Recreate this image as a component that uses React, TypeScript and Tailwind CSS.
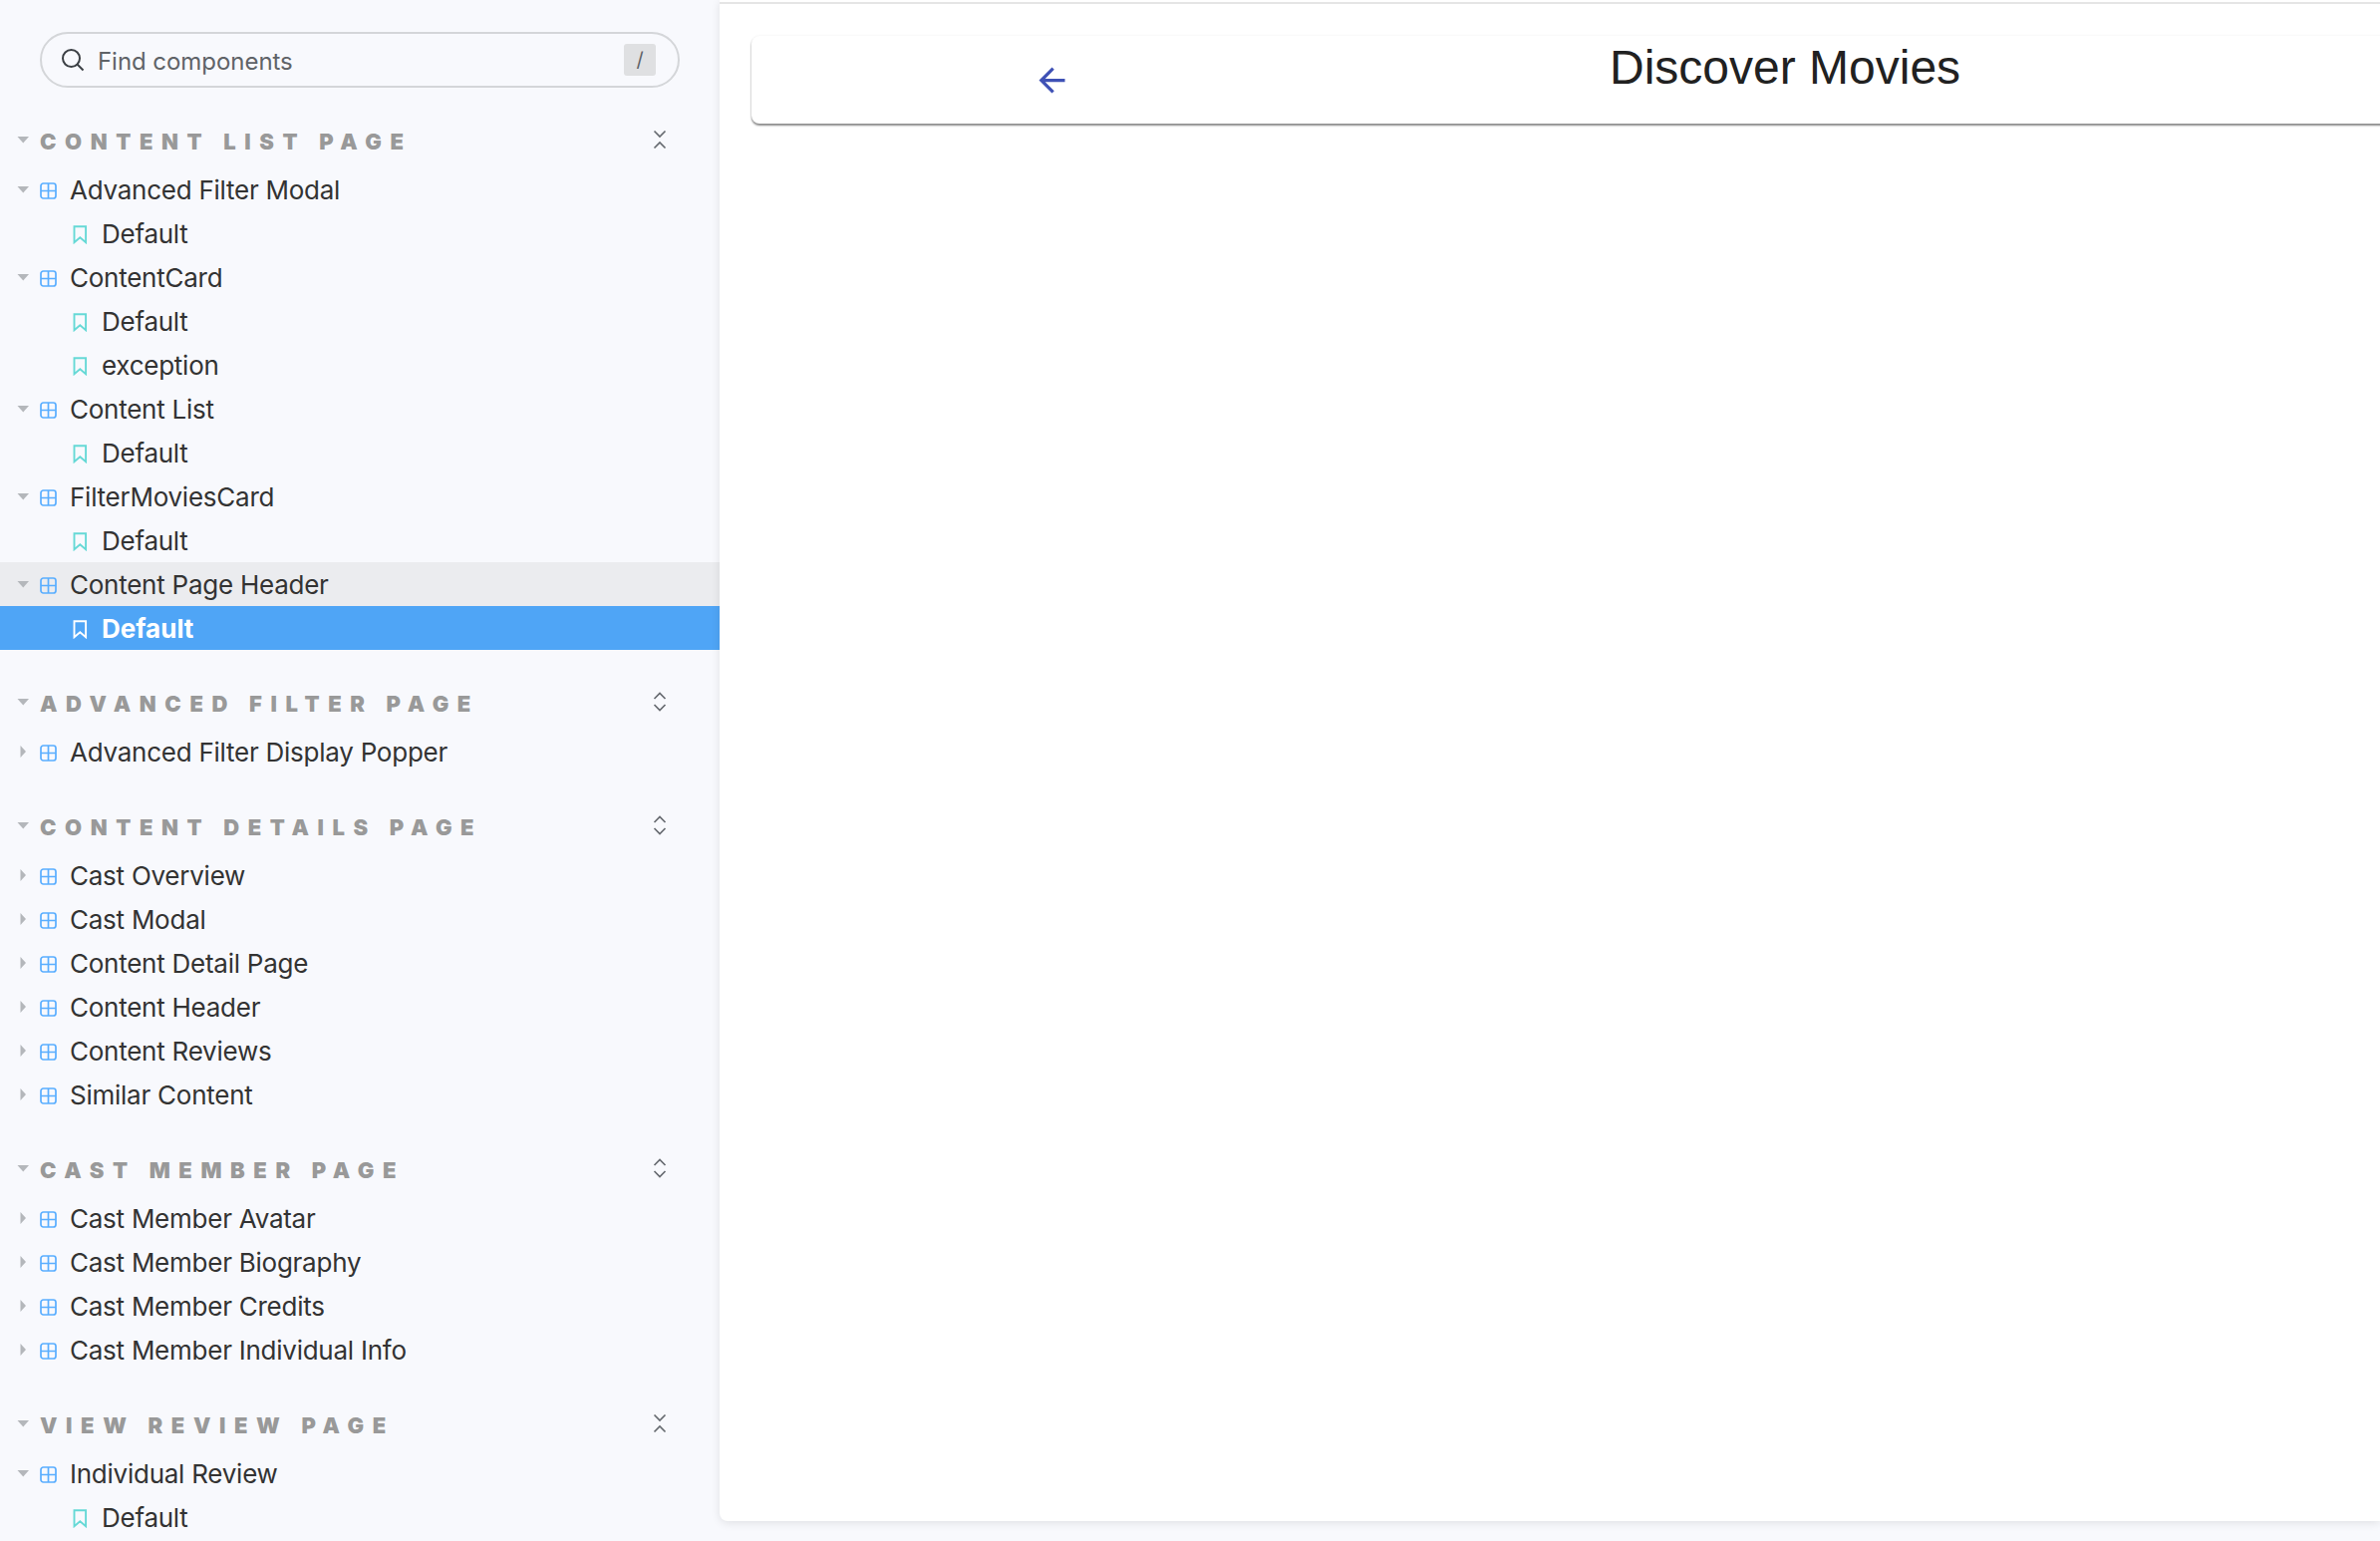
const Caret = ({ open }: { open: boolean }) => (
  <svg width="14" height="14" viewBox="0 0 14 14" className="shrink-0">
    {open ? <path d="M0.5 4h11.5L6.25 10.5z" fill="#b4b7bb" /> : <path d="M3.5 1v12L9 7z" fill="#b4b7bb" />}
  </svg>
);

const GridIcon = () => (
  <svg width="17" height="17" viewBox="0 0 17 17" fill="none" className="shrink-0" stroke="#5aaeff" strokeWidth="1.7">
    <rect x="1" y="1" width="15" height="15" rx="2.5" />
    <path d="M8.5 1v15M1 8.5h15" />
  </svg>
);

const BookmarkIcon = ({ white }: { white?: boolean }) => (
  <svg width="15" height="19" viewBox="0 0 15 19" fill="none" className="shrink-0" stroke={white ? "#ffffff" : "#66d9d6"} strokeWidth="1.9">
    <path d="M1.5 1.2h11.6v16L7.3 12.2 1.5 17.2z" />
  </svg>
);

type Item = { name: string; stories?: string[]; active?: boolean };
type Section = { title: string; collapse: boolean; items: Item[] };

const sections: Section[] = [
  {
    title: "CONTENT LIST PAGE",
    collapse: true,
    items: [
      { name: "Advanced Filter Modal", stories: ["Default"] },
      { name: "ContentCard", stories: ["Default", "exception"] },
      { name: "Content List", stories: ["Default"] },
      { name: "FilterMoviesCard", stories: ["Default"] },
      { name: "Content Page Header", stories: ["Default"], active: true },
    ],
  },
  { title: "ADVANCED FILTER PAGE", collapse: false, items: [{ name: "Advanced Filter Display Popper" }] },
  {
    title: "CONTENT DETAILS PAGE",
    collapse: false,
    items: [
      { name: "Cast Overview" },
      { name: "Cast Modal" },
      { name: "Content Detail Page" },
      { name: "Content Header" },
      { name: "Content Reviews" },
      { name: "Similar Content" },
    ],
  },
  {
    title: "CAST MEMBER PAGE",
    collapse: false,
    items: [
      { name: "Cast Member Avatar" },
      { name: "Cast Member Biography" },
      { name: "Cast Member Credits" },
      { name: "Cast Member Individual Info" },
    ],
  },
  { title: "VIEW REVIEW PAGE", collapse: true, items: [{ name: "Individual Review", stories: ["Default"] }] },
];

const Chevrons = ({ collapse }: { collapse: boolean }) => (
  <svg width="14" height="20" viewBox="0 0 14 20" fill="none" stroke="#666a70" strokeWidth="1.7">
    {collapse ? <path d="M1.5 1.5 7 7l5.5-5.5M1.5 18.5 7 13l5.5 5.5" /> : <path d="M1.5 7 7 1.5 12.5 7M1.5 13 7 18.5 12.5 13" />}
  </svg>
);

export default function App() {
  return (
    <div className="flex h-screen overflow-hidden bg-[#f8f9fd] font-['Inter',sans-serif]">
      <aside className="w-[722px] shrink-0 overflow-hidden">
        <div className="mx-[40px] mt-[32px] flex h-[56px] w-[642px] items-center rounded-full border-2 border-[#d4d6d9] pl-[19px] pr-[22px]">
          <svg width="24" height="24" viewBox="0 0 24 24" fill="none" stroke="#3c4045" strokeWidth="2" className="shrink-0">
            <circle cx="10.5" cy="10.5" r="8.5" />
            <path d="m16.5 16.5 6 6" />
          </svg>
          <span className="ml-[13px] flex-1 pt-[3px] text-[24px] tracking-[-0.05px] text-[#5f6368]">Find components</span>
          <span className="flex h-[32px] w-[32px] items-center justify-center rounded-[3px] bg-[#dfe0e2] text-[20px] text-[#5f6368]">/</span>
        </div>
        <div className="mt-[27px]">
          {sections.map((s) => (
            <section key={s.title} className="mb-[27px]">
              <div className="flex h-[53px] items-center pl-[17px]">
                <span className="-mt-[3px]"><Caret open /></span>
                <h2 className="ml-[9px] flex-1 pt-[1px] text-[22px] leading-none font-black tracking-[8.6px] text-[#999999]">{s.title}</h2>
                <div className="mr-[53px] -mt-[4px] flex"><Chevrons collapse={s.collapse} /></div>
              </div>
              {s.items.map((it) => (
                <div key={it.name}>
                  <div className={`flex h-[44px] items-center pl-[17px] text-[26px] tracking-[-0.25px] text-[#333333] ${it.active ? "bg-[#ebecef]" : ""}`}>
                    <Caret open={!!it.stories} />
                    <span className="ml-[9px] pt-[3px]"><GridIcon /></span>
                    <span className="ml-[13px] pt-[1px] leading-none">{it.name}</span>
                  </div>
                  {it.stories?.map((st) => (
                    <div key={st} className={`flex h-[44px] items-center pl-[73px] text-[26px] ${it.active ? "bg-[#4fa5f6] font-bold text-white" : "tracking-[-0.25px] text-[#333333]"}`}>
                      <span className="pt-[3px]"><BookmarkIcon white={it.active} /></span>
                      <span className="ml-[14px] pt-[1px] leading-none">{st}</span>
                    </div>
                  ))}
                </div>
              ))}
            </section>
          ))}
        </div>
      </aside>
      <main className="mb-[20px] min-w-0 flex-1 overflow-hidden rounded-bl-[8px] bg-white pt-[2px] shadow-[0_2px_10px_rgba(0,0,0,0.1)]">
        <div className="h-full border-t-2 border-[#e5e5e5] pt-[32px] pl-[32px]">
          <div className="flex h-[88px] w-[1800px] items-start rounded-[8px] bg-white pl-[282px] shadow-[0_2px_2px_rgba(0,0,0,0.45),0_0_3px_rgba(0,0,0,0.06)]">
            <svg width="39" height="39" viewBox="0 0 24 24" fill="#3f51b5" className="mt-[25px] shrink-0">
              <path d="M20 11H7.83l5.59-5.59L12 4l-8 8 8 8 1.41-1.41L7.83 13H20z" />
            </svg>
            <h1 className="mt-[4px] ml-[540px] font-['Liberation_Sans',sans-serif] text-[48px] leading-[56px] text-[#212121]">Discover Movies</h1>
          </div>
        </div>
      </main>
    </div>
  );
}
